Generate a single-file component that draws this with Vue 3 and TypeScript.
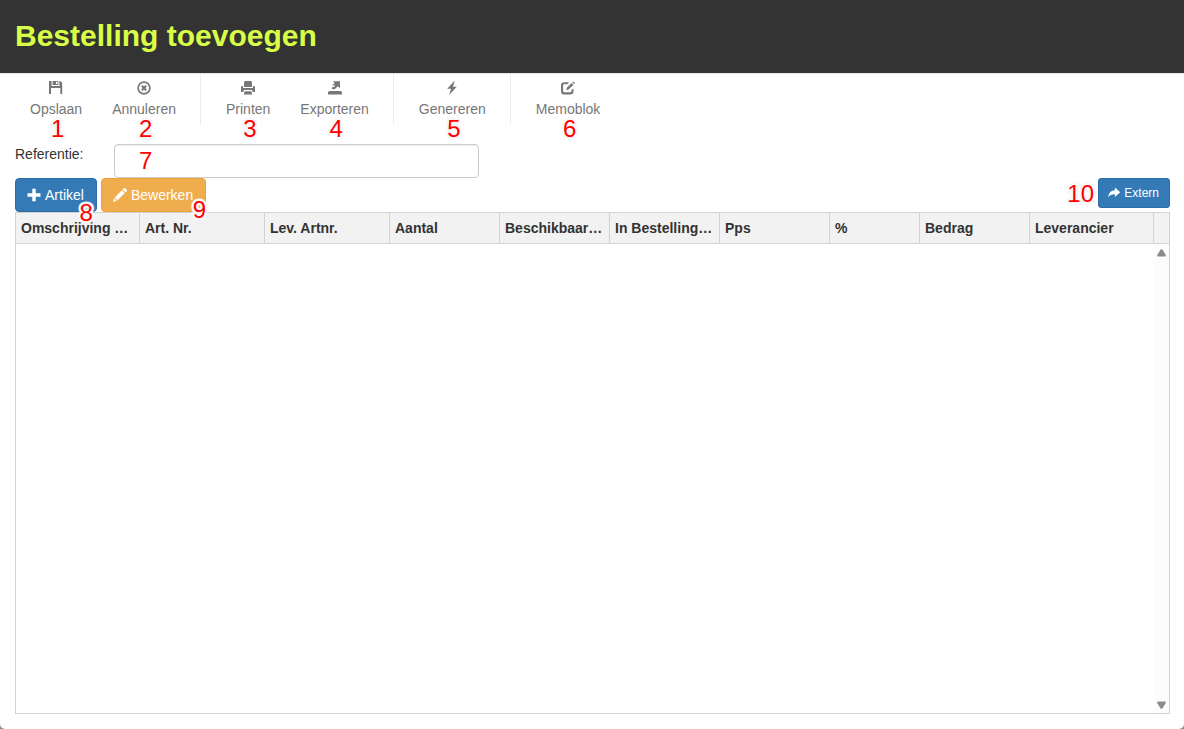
<script setup lang="ts">
import { ref } from 'vue'

interface Tool {
  label: string
  step: number
  icon: string
}

const groups: Tool[][] = [
  [
    { label: 'Opslaan', step: 1, icon: 'save' },
    { label: 'Annuleren', step: 2, icon: 'cancel' },
  ],
  [
    { label: 'Printen', step: 3, icon: 'print' },
    { label: 'Exporteren', step: 4, icon: 'export' },
  ],
  [{ label: 'Genereren', step: 5, icon: 'flash' }],
  [{ label: 'Memoblok', step: 6, icon: 'edit' }],
]

const columns = [
  { label: 'Omschrijving …', width: 124 },
  { label: 'Art. Nr.', width: 125 },
  { label: 'Lev. Artnr.', width: 125 },
  { label: 'Aantal', width: 110 },
  { label: 'Beschikbaar…', width: 110 },
  { label: 'In Bestelling…', width: 110 },
  { label: 'Pps', width: 110 },
  { label: '%', width: 90 },
  { label: 'Bedrag', width: 110 },
  { label: 'Leverancier', width: 0 },
]

const reference = ref('')
</script>

<template>
  <div class="page">
    <header class="title-bar">
      <h1>Bestelling toevoegen</h1>
    </header>

    <nav class="toolbar">
      <div v-for="(group, i) in groups" :key="i" class="group">
        <button v-for="tool in group" :key="tool.label" type="button" class="tool">
          <svg class="icon" viewBox="0 0 14 14" aria-hidden="true">
            <path v-if="tool.icon === 'save'" fill-rule="evenodd" d="M0 0H2.6V5H10.4V0H11.4L13.2 1.8V13H11.3V7H2V13H0ZM3.6 0H9.4V4H3.6ZM7 .8V3H8.5V.8Z" />
            <g v-else-if="tool.icon === 'cancel'" fill="none" stroke="currentColor">
              <circle cx="7" cy="7" r="5.9" stroke-width="1.7" />
              <path d="M4.8 4.8L9.2 9.2M9.2 4.8L4.8 9.2" stroke-width="2" />
            </g>
            <path v-else-if="tool.icon === 'print'" fill-rule="evenodd" d="M4 0H10L11 1.2V6H3V1.2ZM0 6Q0 5 1 5H2V7H12V5H13Q14 5 14 6V11H11.8L11 9H3L2.2 11H0ZM3.7 10.2H10.3L11.2 13.4H2.8Z" />
            <path v-else-if="tool.icon === 'export'" d="M5 .2H12V7.3L9.7 5.2L6.8 8.2L3.9 8V6.2H5.4L7.2 4.5L5.8 4.1L3.8 4.8L5.2 2.9L7 2.4ZM1.2 10H12.8L14 11.2V13.5H0V11.2Z" />
            <path v-else-if="tool.icon === 'flash'" d="M9.3 0L2.2 7.7H6.1L4 14L11.8 5.8H8L9.6 .3Z" />
            <g v-else>
              <path d="M8 1.2H3.2Q0 1.2 0 4.3V10.2Q0 13.5 3.2 13.5H9.3Q12.5 13.5 12.5 10.2V7.5L10.4 9V10.2Q10.4 11.3 9.3 11.3H3.2Q2.1 11.3 2.1 10.2V4.4Q2.1 3.3 3.2 3.3H6.3Z" />
              <path d="M10.6 2L12.4 3.8L7.6 8.6L5.3 9.2L5.8 6.8ZM11.3 1.3L12.2 .4L14 2.1L13.1 3Z" />
            </g>
          </svg>
          <span>{{ tool.label }}</span>
          <span class="mark">{{ tool.step }}</span>
        </button>
      </div>
    </nav>

    <main class="content">
      <div class="field-row">
        <label for="reference">Referentie:</label>
        <div class="field">
          <input id="reference" v-model="reference" type="text" />
          <span class="mark">7</span>
        </div>
      </div>

      <div class="actions">
        <button type="button" class="btn primary">
          <svg class="icon" viewBox="0 0 14 14" aria-hidden="true"><path d="M5.3 .7H8.7V5.3H13.5V8.7H8.7V13.3H5.3V8.7H.5V5.3H5.3Z" /></svg>
          <span>Artikel</span>
          <span class="mark">8</span>
        </button>
        <button type="button" class="btn warning">
          <svg class="icon" viewBox="0 0 14 14" aria-hidden="true"><path d="M11 0Q11.5-.4 12 .1L13.9 2Q14.4 2.5 13.9 3L12.5 4.4L9.6 1.5ZM8.9 2.2L11.8 5.1L4.6 12.3L1.7 9.4ZM1.2 10.2L3.8 12.8L0 14Z" /></svg>
          <span>Bewerken</span>
          <span class="mark high">9</span>
        </button>
        <button type="button" class="btn primary small">
          <svg class="icon" viewBox="0 0 14 14" aria-hidden="true"><path d="M8 .5L14.4 6.2L8 11.6V8.4Q2.8 8.2 0 12.2Q.8 4.2 8 3.8Z" /></svg>
          <span>Extern</span>
          <span class="mark">10</span>
        </button>
      </div>

      <section class="grid">
        <table>
          <colgroup>
            <col v-for="c in columns" :key="c.label" :style="c.width ? { width: c.width + 'px' } : undefined" />
            <col class="gutter" />
          </colgroup>
          <thead>
            <tr>
              <th v-for="c in columns" :key="c.label" scope="col">{{ c.label }}</th>
              <td></td>
            </tr>
          </thead>
        </table>
        <div class="viewport">
          <div class="scrollbar" aria-hidden="true">
            <svg viewBox="0 0 9 8"><path d="M3.6 .6Q4.5-.2 5.4 .6L8.8 6Q9 7.5 8 7.5H1Q0 7.5 .2 6Z" /></svg>
            <svg viewBox="0 0 9 8"><path d="M3.6 7.4Q4.5 8.2 5.4 7.4L8.8 2Q9 .5 8 .5H1Q0 .5 .2 2Z" /></svg>
          </div>
        </div>
      </section>
    </main>
  </div>
</template>

<style>
html {
  background: #8c8c8c;
}
body {
  margin: 0;
}
</style>

<style scoped>
* {
  box-sizing: border-box;
}
.page {
  display: flex;
  flex-direction: column;
  min-height: 100vh;
  background: #fff;
  border-radius: 0 0 5px 5px;
  color: #333;
  font: 14px/20px "Liberation Sans", Arial, sans-serif;
}
.title-bar {
  padding: 19px 15px 21px;
  background: #333;
}
h1 {
  margin: 0;
  color: #d8ff45;
  font-size: 30px;
  line-height: 33px;
}
button,
input {
  font: inherit;
}
.icon {
  width: 14px;
  height: 14px;
  fill: currentColor;
}
.toolbar {
  display: flex;
  height: 52px;
  padding: 0 15px;
  border-top: 1px solid #e7e7e7;
}
.group {
  display: flex;
}
.group + .group {
  margin-left: 9px;
  padding-left: 10px;
  border-left: 1px solid #eee;
}
.tool {
  position: relative;
  display: flex;
  flex-direction: column;
  align-items: center;
  gap: 4px;
  padding: 7px 15px 0;
  border: 0;
  background: none;
  color: #777;
}
.mark {
  position: absolute;
  color: #f00;
  font-size: 24px;
  line-height: 28px;
  -webkit-text-stroke: 5px #f8f8f8;
  paint-order: stroke fill;
  pointer-events: none;
}
.tool .mark {
  top: 41px;
  left: calc(50% - 5px);
}
.content {
  display: flex;
  flex: 1;
  flex-direction: column;
  padding: 19px 14px 15px 15px;
}
.field-row {
  display: flex;
}
.field-row label {
  width: 99px;
}
.field {
  position: relative;
  flex: 0 1 365px;
}
.field input {
  display: block;
  width: 100%;
  height: 34px;
  padding: 6px 12px;
  border: 1px solid #ccc;
  border-radius: 4px;
  background: #fff;
  box-shadow: inset 0 1px 1px rgba(0, 0, 0, 0.075);
}
.field .mark {
  top: 3px;
  left: 25px;
  -webkit-text-stroke: 0;
}
.actions {
  position: relative;
  z-index: 1;
  display: flex;
  align-items: flex-start;
  gap: 4px;
}
.btn {
  position: relative;
  display: flex;
  align-items: center;
  gap: 4px;
  padding: 6px 12px 6px 11px;
  border: 1px solid;
  border-radius: 4px;
  color: #fff;
}
.primary {
  border-color: #2e6da4;
  background: #337ab7;
}
.warning {
  border-color: #eea236;
  background: #f0ad4e;
}
.small {
  margin-left: auto;
  padding: 5px 10px 5px 9px;
  border-radius: 3px;
  font-size: 12px;
  line-height: 18px;
}
.small .icon {
  width: 12px;
  height: 12px;
}
.btn .mark {
  right: 3px;
  bottom: -16px;
}
.btn .mark.high {
  right: -1px;
  bottom: -13px;
}
.btn.small .mark {
  right: 75px;
  bottom: -1px;
}
.grid {
  display: flex;
  flex: 1;
  flex-direction: column;
  border: 1px solid #d2d2d2;
}
table {
  width: 100%;
  border-collapse: separate;
  border-spacing: 0;
  table-layout: fixed;
  background: #f2f2f2;
}
.gutter {
  width: 15px;
}
th,
td {
  height: 31px;
  padding: 0 5px;
  border-bottom: 1px solid #d2d2d2;
}
th {
  overflow: hidden;
  border-right: 1px solid #d2d2d2;
  text-align: left;
  white-space: nowrap;
}
.viewport {
  display: flex;
  flex: 1;
  justify-content: flex-end;
}
.scrollbar {
  display: flex;
  flex-direction: column;
  align-items: center;
  justify-content: space-between;
  width: 15px;
  padding: 5px 0 4px;
  background: #fcfcfc;
}
.scrollbar svg {
  width: 9px;
  height: 8px;
  fill: #8b8b8b;
}
</style>
